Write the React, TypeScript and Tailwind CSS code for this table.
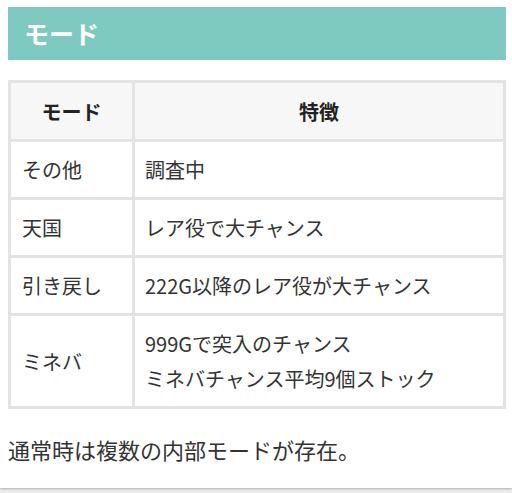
const rows: { mode: string; lines: string[] }[] = [
  { mode: 'その他', lines: ['調査中'] },
  { mode: '天国', lines: ['レア役で大チャンス'] },
  { mode: '引き戻し', lines: ['222G以降のレア役が大チャンス'] },
  { mode: 'ミネバ', lines: ['999Gで突入のチャンス', 'ミネバチャンス平均9個ストック'] },
];

const App = () => {
  return (
    <div className="min-h-[493px] w-[512px] bg-[#ececec] font-['Hiragino_Sans','Noto_Sans_CJK_JP',sans-serif] text-[#333]">
      <div className="bg-white pt-[7px] pb-[19px] pl-2 pr-[6px] shadow-[0_1px_2px_rgba(0,0,0,0.25)]">
        <h2 className="flex h-[53px] items-center bg-[#7ecac0] pl-4 text-[25px] font-bold text-white">
          モード
        </h2>

        <table className="mt-[20px] w-full border-collapse border-[3px] border-[#e3e3e3] text-[20px] leading-[35px]">
          <thead>
            <tr className="bg-[#f7f7f7]">
              <th className="w-[124px] border-[3px] border-[#e3e3e3] pt-[11px] pb-[10px] text-center font-bold text-[#222]">
                モード
              </th>
              <th className="border-[3px] border-[#e3e3e3] pt-[11px] pb-[10px] text-center font-bold text-[#222]">
                特徴
              </th>
            </tr>
          </thead>
          <tbody>
            {rows.map((row) => (
              <tr key={row.mode}>
                <td className="border-[3px] border-[#e3e3e3] px-[11px] py-[10px]">{row.mode}</td>
                <td className="border-[3px] border-[#e3e3e3] px-[10px] py-[10px]">
                  {row.lines.map((line) => (
                    <div key={line}>{line}</div>
                  ))}
                </td>
              </tr>
            ))}
          </tbody>
        </table>

        <p className="mt-[20px] text-[22px] leading-[40px]">通常時は複数の内部モードが存在。</p>
      </div>
    </div>
  );
};

export default App;
